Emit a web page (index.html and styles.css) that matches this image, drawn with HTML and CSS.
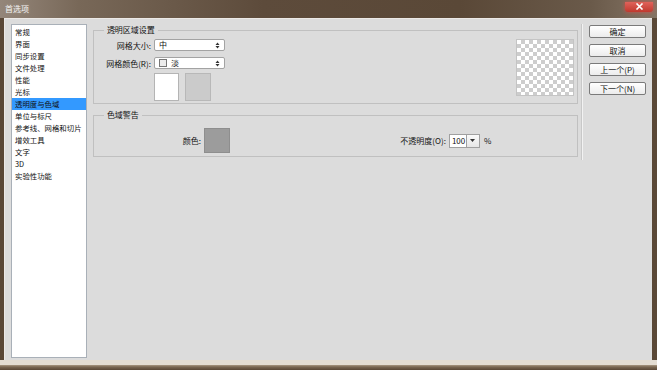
FILE: index.html
```html
<!DOCTYPE html>
<html lang="zh-CN">
<head>
    <meta charset="UTF-8">
    <meta name="viewport" content="width=device-width, initial-scale=1.0">
    <title>首选项</title>
    <link rel="stylesheet" href="styles.css">
</head>
<body>
    <div class="window">
        <div class="titlebar">
            <span class="title">首选项</span>
            <span class="close">
                <svg width="9" height="7" viewBox="0 0 9 7"><path d="M1.5 0.5 L7.5 6.5 M7.5 0.5 L1.5 6.5" stroke="#fff" stroke-width="1.6"/></svg>
            </span>
        </div>
        <div class="client">
            <ul class="nav">
                <li>常规</li>
                <li>界面</li>
                <li>同步设置</li>
                <li>文件处理</li>
                <li>性能</li>
                <li>光标</li>
                <li class="active">透明度与色域</li>
                <li>单位与标尺</li>
                <li>参考线、网格和切片</li>
                <li>增效工具</li>
                <li>文字</li>
                <li>3D</li>
                <li>实验性功能</li>
            </ul>

            <div class="panels">
                <fieldset class="group">
                    <legend>透明区域设置</legend>
                    <div class="group-body">
                        <div class="form">
                            <div class="row">
                                <label>网格大小:</label>
                                <div class="select">
                                    <span class="value">中</span>
                                    <svg class="arrows" width="5" height="7" viewBox="0 0 5 7"><path d="M0.5 3 L2.5 0.5 L4.5 3 Z M0.5 4 L2.5 6.5 L4.5 4 Z" fill="#333"/></svg>
                                </div>
                            </div>
                            <div class="row">
                                <label>网格颜色(R):</label>
                                <div class="select">
                                    <span class="chip"></span>
                                    <span class="value">淡</span>
                                    <svg class="arrows" width="5" height="7" viewBox="0 0 5 7"><path d="M0.5 3 L2.5 0.5 L4.5 3 Z M0.5 4 L2.5 6.5 L4.5 4 Z" fill="#333"/></svg>
                                </div>
                            </div>
                            <div class="swatches">
                                <div class="swatch swatch-white"></div>
                                <div class="swatch swatch-gray"></div>
                            </div>
                        </div>
                        <div class="preview"></div>
                    </div>
                </fieldset>

                <fieldset class="group">
                    <legend>色域警告</legend>
                    <div class="gamut-row">
                        <label class="color-label">颜色:</label>
                        <div class="swatch swatch-warn"></div>
                        <div class="opacity">
                            <label>不透明度(O):</label>
                            <span class="num">100</span>
                            <span class="spin">
                                <svg width="5" height="3" viewBox="0 0 5 3"><path d="M0 0 L5 0 L2.5 3 Z" fill="#333"/></svg>
                            </span>
                            <span class="pct">%</span>
                        </div>
                    </div>
                </fieldset>
            </div>

            <div class="sep"></div>

            <div class="buttons">
                <button>确定</button>
                <button>取消</button>
                <button>上一个(P)</button>
                <button>下一个(N)</button>
            </div>
        </div>
        <div class="bottom-frame"></div>
    </div>
</body>
</html>
```

FILE: styles.css
```css
body {
    margin: 0;
    padding: 0;
    font-family: "Noto Sans CJK SC", "Liberation Sans", sans-serif;
    font-size: 8px;
    color: #111;
}
.window {
    width: 657px;
    height: 370px;
    display: flex;
    flex-direction: column;
    background: linear-gradient(to right, #5a4837, #4e3e2f 50%, #5a4837);
}
.titlebar {
    height: 18px;
    display: flex;
    align-items: center;
    justify-content: space-between;
    padding: 0 4px 0 5px;
    background: linear-gradient(to right, #94867a 0%, #786858 12%, #5d4b3b 40%, #5a4837 70%, #6a5a4a 90%, #857565 100%);
}
.title {
    color: #f2f2f2;
    text-shadow: 0 0 3px #a89a8c;
    line-height: 12px;
}
.close {
    width: 28px;
    height: 10px;
    margin-top: -5px;
    display: flex;
    align-items: center;
    justify-content: center;
    border-radius: 0 0 3px 3px;
    background: linear-gradient(#e0625a, #c0392e);
    box-shadow: 0 0 4px #d0504a;
}
.client {
    flex: 1;
    margin: 0 5px 0 4px;
    padding: 5px 6px 1px 6px;
    display: flex;
    align-items: flex-start;
    background: #dcdcdc;
    border-top: 1px solid #ece9e6;
    border-left: 1px solid #ece9e6;
}
.nav {
    list-style: none;
    margin: 0;
    padding: 1px 0;
    width: 76px;
    height: 334px;
    box-sizing: border-box;
    background: #fff;
    border: 1px solid #a9b0b8;
    font-size: 7.4px;
}
.nav li {
    height: 12px;
    line-height: 12px;
    padding-left: 3px;
    white-space: nowrap;
}
.nav li.active {
    background: #3399ff;
}
.panels {
    width: 486px;
    margin-left: 6px;
    display: flex;
    flex-direction: column;
    gap: 5px;
}
.group {
    margin: 0;
    padding: 0;
    border: 1px solid #c0c0c0;
    min-width: 0;
}
.group legend {
    margin-left: 10px;
    padding: 0 3px;
    line-height: 12px;
}
.group-body {
    display: flex;
    justify-content: space-between;
    padding: 3px 3px 2px 9px;
}
.form {
    display: flex;
    flex-direction: column;
}
.row {
    display: flex;
    align-items: center;
    gap: 3px;
    height: 12px;
    margin-bottom: 6px;
}
.row + .row {
    margin-bottom: 4px;
}
.row label {
    width: 48px;
    text-align: right;
    white-space: nowrap;
}
.select {
    width: 71px;
    height: 12px;
    box-sizing: border-box;
    display: flex;
    align-items: center;
    padding: 0 4px 0 4px;
    background: #fff;
    border: 1px solid #a3a3a3;
    border-radius: 2px;
}
.select .value {
    flex: 1;
    line-height: 10px;
}
.chip {
    width: 6px;
    height: 6px;
    margin-right: 4px;
    background: #ececec;
    border: 1px solid #777;
}
.swatches {
    display: flex;
    gap: 6px;
    margin-left: 51px;
}
.swatch {
    width: 25px;
    height: 28px;
    box-sizing: border-box;
}
.swatch-white {
    background: #fff;
    border: 1px solid #b4b4b4;
}
.swatch-gray {
    width: 26px;
    background: #cbcbcb;
    border: 1px solid #b8b8b8;
}
.preview {
    width: 58px;
    height: 57px;
    box-sizing: border-box;
    border: 1px solid #c4c4c4;
    background-color: #fff;
    background-image:
        linear-gradient(45deg, #cdcdcd 25%, transparent 25%, transparent 75%, #cdcdcd 75%),
        linear-gradient(45deg, #cdcdcd 25%, transparent 25%, transparent 75%, #cdcdcd 75%);
    background-size: 8px 8px;
    background-position: 0 0, 4px 4px;
}
.gamut-row {
    display: flex;
    align-items: center;
    padding: 7px 0 3px 0;
}
.color-label {
    width: 107px;
    text-align: right;
    margin-right: 3px;
}
.swatch-warn {
    width: 26px;
    height: 25px;
    background: #9c9c9c;
    border: 1px solid #8e8e8e;
}
.opacity {
    display: flex;
    align-items: center;
    margin-left: 160px;
}
.opacity label {
    width: 56px;
    text-align: right;
    margin-right: 3px;
    white-space: nowrap;
}
.num {
    width: 18px;
    height: 14px;
    box-sizing: border-box;
    padding-left: 2px;
    line-height: 12px;
    background: #fff;
    border: 1px solid #a0a0a0;
}
.spin {
    width: 13px;
    height: 14px;
    box-sizing: border-box;
    display: flex;
    align-items: center;
    justify-content: center;
    background: linear-gradient(#fafafa, #e6e6e6);
    border: 1px solid #a0a0a0;
    border-left: none;
}
.pct {
    margin-left: 4px;
}
.sep {
    width: 1px;
    height: 136px;
    margin: 0 7px 0 3px;
    background: #c8c8c8;
    box-shadow: 1px 0 0 #f2f2f2;
}
.buttons {
    width: 57px;
    margin-top: 1px;
    display: flex;
    flex-direction: column;
    gap: 6px;
}
.buttons button {
    height: 13px;
    padding: 0;
    font-family: inherit;
    font-size: 8px;
    line-height: 11px;
    color: #111;
    background: linear-gradient(#ffffff, #ececec);
    border: 1px solid #7a7a7a;
    border-radius: 2px;
}
.bottom-frame {
    height: 10px;
    background: linear-gradient(#e4ddd3 0, #e4ddd3 5px, #a89782 5px, #7a6753 7px, #5a4837 10px);
}
```
